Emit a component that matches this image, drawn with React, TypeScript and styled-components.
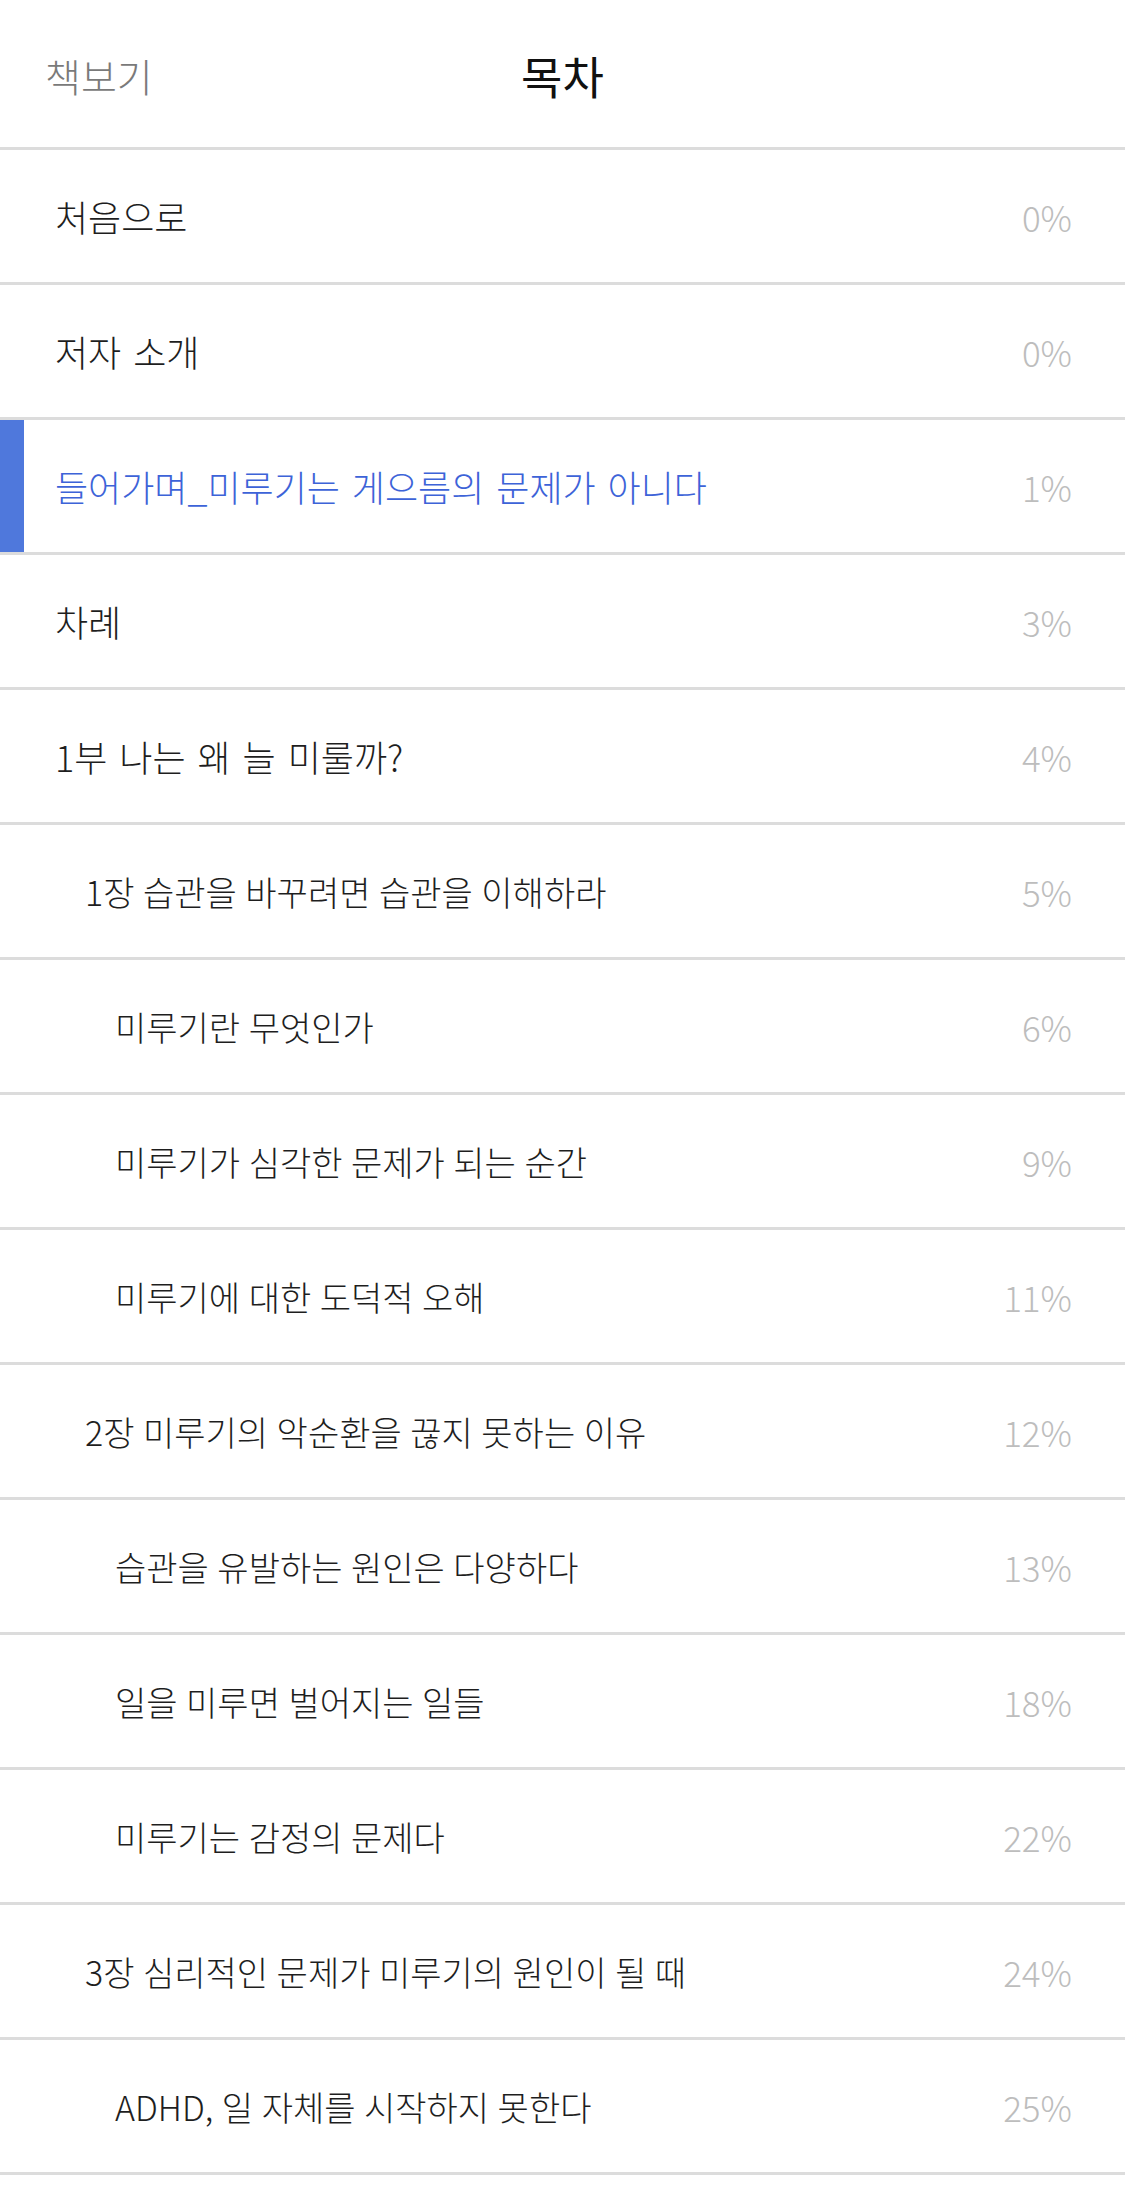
import React, { FC } from 'react';
import styled, { createGlobalStyle } from 'styled-components';

const GlobalStyle = createGlobalStyle`
  body {
    margin: 0;
    background: #fff;
    font-family: "Noto Sans CJK KR", "Noto Sans", sans-serif;
  }
`;

const Page = styled.div`
  width: 1125px;
  min-height: 2202px;
  background: #fff;
`;

const Header = styled.header`
  height: 147px;
  display: grid;
  grid-template-columns: 1fr auto 1fr;
  align-items: center;
  border-bottom: 3px solid #dcdcdc;
`;

const BackLink = styled.span`
  padding-left: 45px;
  font-size: 39px;
  font-weight: 300;
  color: #7a7a7a;
  margin-top: 2px;
`;

const Title = styled.h1`
  margin: 0;
  font-size: 45px;
  font-weight: 400;
  color: #111;
  margin-top: 4px;
`;

const List = styled.ul`
  list-style: none;
  margin: 0;
  padding: 0;
`;

const Row = styled.li<{ $level: number; $active?: boolean }>`
  height: 132px;
  display: flex;
  align-items: center;
  justify-content: space-between;
  padding-left: ${(p) => 55 + p.$level * 30}px;
  padding-right: 53px;
  border-bottom: 3px solid #dcdcdc;
  box-shadow: ${(p) => (p.$active ? 'inset 24px 0 0 #4f78dc' : 'none')};
`;

// top-level entries are set a little larger than chapters and sections
const Label = styled.span<{ $level: number; $active?: boolean }>`
  font-size: ${(p) => (p.$level === 0 ? 36 : 34)}px;
  word-spacing: ${(p) => (p.$level === 0 ? 4 : 1)}px;
  font-weight: 300;
  color: ${(p) => (p.$active ? '#3d63d8' : '#1e1e1e')};
  white-space: nowrap;
`;

const Percent = styled.span`
  font-size: 35px;
  font-weight: 300;
  color: #bdbdbd;
`;

type TItem = { title: string; level: number; percent: number; active?: boolean };

const items: TItem[] = [
  { title: '처음으로', level: 0, percent: 0 },
  { title: '저자 소개', level: 0, percent: 0 },
  { title: '들어가며_미루기는 게으름의 문제가 아니다', level: 0, percent: 1, active: true },
  { title: '차례', level: 0, percent: 3 },
  { title: '1부 나는 왜 늘 미룰까?', level: 0, percent: 4 },
  { title: '1장 습관을 바꾸려면 습관을 이해하라', level: 1, percent: 5 },
  { title: '미루기란 무엇인가', level: 2, percent: 6 },
  { title: '미루기가 심각한 문제가 되는 순간', level: 2, percent: 9 },
  { title: '미루기에 대한 도덕적 오해', level: 2, percent: 11 },
  { title: '2장 미루기의 악순환을 끊지 못하는 이유', level: 1, percent: 12 },
  { title: '습관을 유발하는 원인은 다양하다', level: 2, percent: 13 },
  { title: '일을 미루면 벌어지는 일들', level: 2, percent: 18 },
  { title: '미루기는 감정의 문제다', level: 2, percent: 22 },
  { title: '3장 심리적인 문제가 미루기의 원인이 될 때', level: 1, percent: 24 },
  { title: 'ADHD, 일 자체를 시작하지 못한다', level: 2, percent: 25 },
];

const App: FC = () => (
  <Page>
    <GlobalStyle />
    <Header>
      <BackLink>책보기</BackLink>
      <Title>목차</Title>
      <span />
    </Header>
    <List>
      {items.map((item) => (
        <Row key={item.title} $level={item.level} $active={item.active}>
          <Label $level={item.level} $active={item.active}>{item.title}</Label>
          <Percent>{`${item.percent}%`}</Percent>
        </Row>
      ))}
    </List>
  </Page>
);

export default App;
